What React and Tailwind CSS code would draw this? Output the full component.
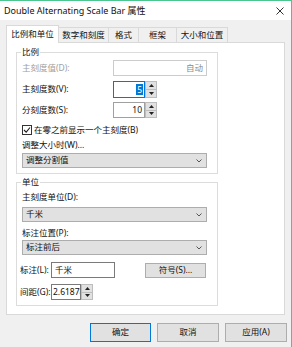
import React from "react";

const font = "font-['Noto_Sans','Noto_Sans_CJK_SC',sans-serif]";

function Spinner() {
  return (
    <div className="flex flex-col w-[12px] h-full">
      <div className="flex-1 bg-[#e1e1e1] border border-[#bdbdbd] flex items-center justify-center">
        <svg width="5" height="3" viewBox="0 0 5 3"><path d="M0 3 L2.5 0 L5 3 Z" fill="#222" /></svg>
      </div>
      <div className="flex-1 bg-[#e1e1e1] border border-t-0 border-[#bdbdbd] flex items-center justify-center">
        <svg width="5" height="3" viewBox="0 0 5 3"><path d="M0 0 L2.5 3 L5 0 Z" fill="#222" /></svg>
      </div>
    </div>
  );
}

function Select({ value }) {
  return (
    <div className="h-[15px] w-[185px] bg-[#e1e1e1] border border-[#adadad] flex items-center justify-between pl-[3px] pr-[4px]">
      <span className="text-[8.5px] leading-none text-[#111]">{value}</span>
      <svg width="6" height="4" viewBox="0 0 6 4">
        <path d="M0.5 0.5 L3 3 L5.5 0.5" fill="none" stroke="#555" strokeWidth="1" />
      </svg>
    </div>
  );
}

function Group({ title, className, children }) {
  return (
    <div className={"relative w-[202px] border border-[#dcdcdc] " + className}>
      <span className="absolute left-[4px] top-[-7px] px-[1px] bg-white text-[8.5px] leading-[12px] text-[#111]">
        {title}
      </span>
      {children}
    </div>
  );
}

export default function App() {
  const tabs = ["数字和刻度", "格式", "框架", "大小和位置"];
  const tabWidths = ["w-[50px]", "w-[30px]", "w-[38px]", "w-[51px]"];

  return (
    <div className={"w-[292px] h-[347px] bg-[#f0f0f0] border-t border-r border-[#4cc68f] flex flex-col text-[#111] " + font}>
      <div className="h-[19px] bg-white flex items-center justify-between pl-[4px] pr-[7px]">
        <span className="text-[9px] leading-none text-[#111]">Double Alternating Scale Bar 属性</span>
        <svg width="8" height="8" viewBox="0 0 8 8">
          <path d="M0.5 0.5 L7.5 7.5 M7.5 0.5 L0.5 7.5" stroke="#333" strokeWidth="1" />
        </svg>
      </div>

      <div className="ml-[6px] mt-[5px] w-[279px]">
        <div className="h-[17px] flex items-end">
          <div className="relative z-10 h-[18px] -mb-px w-[53px] bg-white border border-b-0 border-[#d9d9d9] flex items-center justify-center text-[8.5px] leading-none">
            比例和单位
          </div>
          {tabs.map((t, i) => (
            <div
              key={t}
              className={"h-[15px] bg-[#f0f0f0] border border-b-0 border-l-0 border-[#d9d9d9] flex items-center justify-center text-[8.5px] leading-none " + tabWidths[i]}
            >
              {t}
            </div>
          ))}
        </div>

        <div className="h-[273px] bg-white border border-[#d9d9d9] pl-[9px] pt-[9px]">
          <Group title="比例" className="h-[122px]">
            <div className="pl-[5px] pt-[7px] flex flex-col">
              <div className="h-[16px] flex items-center">
                <span className="w-[91px] text-[8.5px] leading-none text-[#a0a0a0]">主刻度值(D):</span>
                <div className="w-[94px] h-full border border-[#cccccc] flex items-center justify-end pr-[3px] text-[8.5px] leading-none text-[#8a8a8a]">
                  自动
                </div>
              </div>
              <div className="mt-[5px] h-[17px] flex items-center">
                <span className="w-[91px] text-[8.5px] leading-none">主刻度数(V):</span>
                <div className="w-[32px] h-full border border-[#0078d7] flex items-center justify-end pr-[1px]">
                  <span className="bg-[#0078d7] text-white text-[8.5px] leading-[11px] px-[1px]">5</span>
                </div>
                <Spinner />
              </div>
              <div className="mt-[4px] h-[16px] flex items-center">
                <span className="w-[91px] text-[8.5px] leading-none">分刻度数(S):</span>
                <div className="w-[32px] h-full border border-[#a0a0a0] flex items-center justify-end pr-[2px] text-[8.5px] leading-none">
                  10
                </div>
                <Spinner />
              </div>
              <div className="mt-[6px] h-[12px] flex items-center">
                <div className="w-[10px] h-[10px] border border-[#333] mr-[2px] flex items-center justify-center">
                  <svg width="8" height="8" viewBox="0 0 8 8">
                    <path d="M1 4 L3.2 6.2 L7 1.5" fill="none" stroke="#222" strokeWidth="1.1" />
                  </svg>
                </div>
                <span className="text-[8.5px] leading-none">在零之前显示一个主刻度(B)</span>
              </div>
              <div className="mt-[3px] h-[12px] flex items-center text-[8.5px] leading-none">调整大小时(W)...</div>
              <div className="mt-[2px]">
                <Select value="调整分割值" />
              </div>
            </div>
          </Group>

          <Group title="单位" className="h-[124px] mt-[8px]">
            <div className="pl-[5px] pt-[8px] flex flex-col">
              <div className="h-[12px] flex items-center text-[8.5px] leading-none">主刻度单位(D):</div>
              <div className="mt-[4px]">
                <Select value="千米" />
              </div>
              <div className="mt-[5px] h-[12px] flex items-center text-[8.5px] leading-none">标注位置(P):</div>
              <div className="mt-[1px]">
                <Select value="标注前后" />
              </div>
              <div className="mt-[7px] h-[16px] flex items-center -ml-[2px]">
                <span className="w-[31px] text-[8.5px] leading-none">标注(L):</span>
                <div className="w-[64px] h-full border border-[#7a7a7a] flex items-center pl-[3px] text-[8.5px] leading-none">
                  千米
                </div>
                <div className="ml-[30px] w-[61px] h-[15px] bg-[#e1e1e1] border border-[#adadad] flex items-center justify-center text-[8.5px] leading-none">
                  符号(S)...
                </div>
              </div>
              <div className="mt-[6px] h-[16px] flex items-center -ml-[2px]">
                <span className="w-[31px] text-[8.5px] leading-none">间距(G):</span>
                <div className="w-[30px] h-full border border-[#7a7a7a] flex items-center pl-[1px] text-[8.5px] leading-none overflow-hidden whitespace-nowrap">
                  2.61878
                </div>
                <Spinner />
              </div>
            </div>
          </Group>
        </div>
      </div>

      <div className="mt-[8px] flex justify-end gap-[6px] pr-[4px]">
        <div className="w-[61px] h-[19px] bg-[#e1e1e1] border border-[#0078d7] flex items-center justify-center text-[8.5px] leading-none">
          确定
        </div>
        <div className="w-[62px] h-[19px] bg-[#e1e1e1] border border-[#adadad] flex items-center justify-center text-[8.5px] leading-none">
          取消
        </div>
        <div className="w-[62px] h-[19px] bg-[#e1e1e1] border border-[#adadad] flex items-center justify-center text-[8.5px] leading-none">
          应用(A)
        </div>
      </div>
    </div>
  );
}
